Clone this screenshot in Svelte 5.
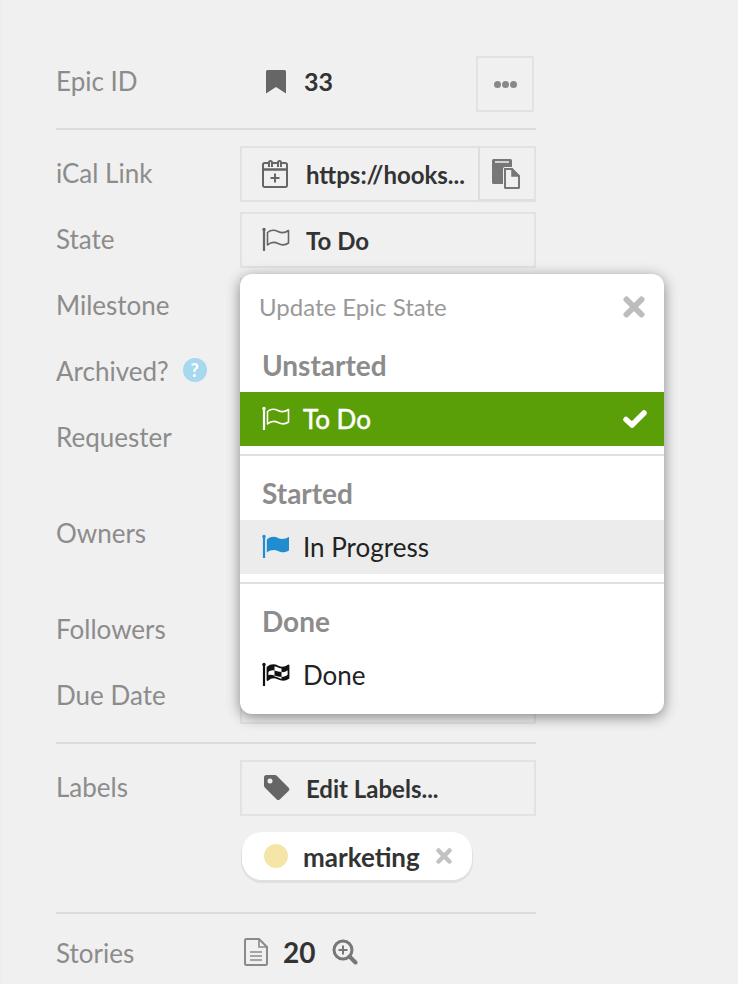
<script>
  const rows = [
    { label: 'Milestone', height: 56 },
    { label: 'Archived?', height: 56, help: true },
    { label: 'Requester', height: 86 },
    { label: 'Owners', height: 86 },
    { label: 'Followers', height: 56 },
    { label: 'Due Date', height: 56 }
  ];
</script>

{#snippet flag(color)}
  <svg class="flag" viewBox="0 0 28 26" width="28" height="26" fill="none" stroke={color} stroke-width="1.600">
    <path d="M2 3v21" stroke-width="2.200" />
    <circle cx="2" cy="2.400" r="1.700" fill={color} stroke="none" />
    <path d="M5.500 5.500C9 2.500 13 3 16 4.500S23 6 26.500 3.500V16C23 18.500 19 18 16 16.500S9 15 5.500 18z" stroke-linejoin="round" />
  </svg>
{/snippet}

<main class="panel">
  <div class="row top">
    <div class="label">Epic ID</div>
    <div class="epic">
      <svg class="bookmark" viewBox="0 0 20 24" width="20" height="24"><path d="M1.500 0h17A1.500 1.500 0 0 1 20 1.500V23.500L10 17 0 23.500V1.500A1.500 1.500 0 0 1 1.500 0z" fill="#666" /></svg>
      <span class="num">33</span>
      <button class="more" aria-label="More"><i></i><i></i><i></i></button>
    </div>
  </div>
  <hr class="rule first" />

  <div class="row">
    <div class="label">iCal Link</div>
    <div class="box ical">
      <svg class="icon" viewBox="0 0 26 28" width="26" height="28" fill="none" stroke="#666" stroke-width="2">
        <path d="M6 4H2.500A1.500 1.500 0 0 0 1 5.500v21A1.500 1.500 0 0 0 2.500 28h21a1.500 1.500 0 0 0 1.500-1.500v-21A1.500 1.500 0 0 0 23.500 4H20M10 4h6" transform="translate(0 -1)" />
        <path d="M1 9.500h24" stroke-width="2.500" />
        <path d="M7 7V2.500a1.500 1.500 0 0 1 3 0V7M16 7V2.500a1.500 1.500 0 0 1 3 0V7" />
        <path d="M13 13.500v9M8.500 18h9" />
      </svg>
      <span class="text link">https://hooks...</span>
      <button class="copy" aria-label="Copy">
        <svg viewBox="0 0 28 30" width="28" height="30">
          <path d="M1.500 0h17A1.500 1.500 0 0 1 20 1.500V8h-7a2 2 0 0 0-2 2v15H1.500A1.500 1.500 0 0 1 0 23.500V1.500A1.500 1.500 0 0 1 1.500 0z" fill="#777" />
          <path d="M3 3h14" stroke="#f0f0f0" stroke-width="1.500" />
          <path d="M13 10h7l7 7v11.500a.5.500 0 0 1-.5.500h-13a.5.500 0 0 1-.5-.5z" fill="none" stroke="#777" stroke-width="2" />
          <path d="M20 9v8h7" fill="#777" stroke="#777" stroke-width="1.500" />
        </svg>
      </button>
    </div>
  </div>

  <div class="row">
    <div class="label">State</div>
    <div class="box">
      <span class="slot">{@render flag('#666')}</span>
      <span class="text">To Do</span>
    </div>
  </div>

  {#each rows as row}
    <div class="row">
      <div class="label">
        {row.label}
        {#if row.help}<span class="help">?</span>{/if}
      </div>
      <div class="box" style="height: {row.height}px"></div>
    </div>
  {/each}

  <hr class="rule labels-rule" />

  <div class="row">
    <div class="label">Labels</div>
    <div class="box">
      <svg class="icon tag" viewBox="0 0 26 25" width="26" height="25">
        <path d="M2.500 0h8.500a3 3 0 0 1 2 1l11.500 11.500a2.500 2.500 0 0 1 0 3.500L16 24.200a2.500 2.500 0 0 1-3.500 0L1 12.700a3 3 0 0 1-1-2V2.500A2.500 2.500 0 0 1 2.500 0zM6 3.500a2.500 2.500 0 1 0 0 5 2.500 2.500 0 0 0 0-5z" fill="#666" fill-rule="evenodd" />
      </svg>
      <span class="text labels-text">Edit Labels...</span>
    </div>
  </div>

  <div class="chip-row">
    <div class="chip">
      <span class="dot"></span>
      <span class="chip-name">marketing</span>
      <svg viewBox="0 0 16 16" width="16" height="16"><path d="M2.500 2.500l11 11M13.500 2.500l-11 11" stroke="#c2c2c2" stroke-width="4.500" stroke-linecap="round" /></svg>
    </div>
  </div>

  <hr class="rule" />

  <div class="row stories">
    <div class="label">Stories</div>
    <div class="story-value">
      <svg viewBox="0 0 24 28" width="24" height="28" fill="none" stroke="#8a8a8a" stroke-width="2">
        <path d="M1 2.500A1.500 1.500 0 0 1 2.500 1H15l8 8v16.500a1.500 1.500 0 0 1-1.500 1.500h-19A1.500 1.500 0 0 1 1 25.500z" />
        <path d="M15 1v8h8M6 14h12M6 18h12M6 22h12" stroke-width="1.600" />
      </svg>
      <span class="count">20</span>
      <svg viewBox="0 0 26 26" width="26" height="26" fill="none" stroke="#777">
        <circle cx="11" cy="11" r="9" stroke-width="3" />
        <path d="M11 6.500v9M6.500 11h9" stroke-width="2" />
        <path d="M17.500 17.500l6 6" stroke-width="4" stroke-linecap="round" />
      </svg>
    </div>
  </div>

  <section class="popup">
    <header class="popup-head">
      <span>Update Epic State</span>
      <svg viewBox="0 0 22 22" width="22" height="22"><path d="M3.500 3.500l15 15M18.500 3.500l-15 15" stroke="#bdbdbd" stroke-width="6" stroke-linecap="round" /></svg>
    </header>

    <h3 class="group first-group">Unstarted</h3>
    <div class="option selected">
      {@render flag('#fff')}
      <span class="name">To Do</span>
      <svg class="check" viewBox="0 0 24 18" width="24" height="18"><path d="M3 9.500l6 5.500L21 3" fill="none" stroke="#fff" stroke-width="5.500" stroke-linecap="round" stroke-linejoin="round" /></svg>
    </div>
    <hr class="sep" />

    <h3 class="group">Started</h3>
    <div class="option hover">
      <svg class="flag" viewBox="0 0 28 26" width="28" height="26">
        <path d="M2 3v21" stroke="#1f8dd0" stroke-width="2.200" />
        <circle cx="2" cy="2.400" r="1.700" fill="#1f8dd0" />
        <path d="M4.800 5.500C9 2 13 2.500 16 4S23 5.500 27 2.800V16.500C23 19 19 18.500 16 17S9 15.500 4.800 18.500z" fill="#1f8dd0" />
      </svg>
      <span class="name">In Progress</span>
    </div>
    <hr class="sep" />

    <h3 class="group">Done</h3>
    <div class="option">
      <svg class="flag" viewBox="0 0 28 26" width="28" height="26">
        <path d="M2 3v21" stroke="#111" stroke-width="2.200" />
        <circle cx="2" cy="2.400" r="1.700" fill="#111" />
        <path d="M5.500 5.500C9 2.500 13 3 16 4.500S23 6 26.500 3.500V16C23 18.500 19 18 16 16.500S9 15 5.500 18z" fill="#fff" stroke="#111" stroke-width="1.800" stroke-linejoin="round" />
        <path d="M5.500 5.500C8 3.500 10.500 3.200 12.500 3.500V8.500C10 8 8 8.500 5.500 10.500zM19.500 5.500C22 6 24 5 26.500 3.500V8C24 9.500 22 10.500 19.500 10zM12.500 8.500C15 9 17 10 19.500 10V15C17 15 15 14 12.500 13.500zM5.500 13.500C8 12 10 13 12.500 13.500V15C10 14.500 8 15.500 5.500 18zM19.500 15C22 15 24 14 26.500 12.500V16C24 18 22 18 19.500 17.500z" fill="#111" />
      </svg>
      <span class="name">Done</span>
    </div>
  </section>
</main>

<style>
  :global(body) {
    background: #f0f0f0;
    font-family: Lato, "Open Sans", sans-serif;
  }

  .panel {
    position: relative;
    box-sizing: border-box;
    width: 738px;
    height: 984px;
    padding: 56px 0 0 56px;
    overflow: hidden;
    box-shadow: inset 2px 0 0 #ededed;
  }

  .row {
    display: grid;
    grid-template-columns: 184px 296px;
    margin-bottom: 10px;
  }

  .label {
    display: flex;
    align-items: flex-start;
    gap: 14px;
    padding: 11px 0 0;
    font-size: 26px;
    line-height: 32px;
    color: #8c8c8c;
  }

  .top .label {
    padding-top: 9px;
  }

  .epic {
    display: flex;
    align-items: flex-start;
    height: 56px;
  }

  .bookmark {
    margin: 14px 0 0 26px;
  }

  .num {
    margin: 8px 0 0 18px;
    font-size: 25px;
    line-height: 34px;
    font-weight: 700;
    color: #333;
  }

  .more {
    display: flex;
    align-items: center;
    justify-content: center;
    gap: 1px;
    box-sizing: border-box;
    width: 58px;
    height: 56px;
    margin-left: auto;
    margin-right: 2px;
    padding: 1px 0 0;
    background: none;
    border: 2px solid #e2e2e2;
  }

  .more i {
    width: 7px;
    height: 7px;
    border-radius: 50%;
    background: #888;
  }

  .rule {
    width: 480px;
    height: 2px;
    margin: 0 0 16px;
    border: 0;
    background: #dcdcdc;
  }

  .rule.first {
    margin-top: 16px;
  }

  .labels-rule {
    margin-top: 18px;
  }

  .box {
    display: flex;
    align-items: center;
    box-sizing: border-box;
    height: 56px;
    padding: 0 0 0 20px;
    border: 2px solid #e2e2e2;
  }

  .slot {
    display: flex;
  }

  .icon {
    flex: none;
  }

  .text {
    margin-left: 16px;
    font-size: 24px;
    font-weight: 700;
    color: #333;
    white-space: nowrap;
  }

  .ical .text {
    margin-left: 18px;
  }

  .copy {
    display: flex;
    align-items: center;
    justify-content: center;
    box-sizing: border-box;
    width: 56px;
    height: 54px;
    margin: 0 0 0 auto;
    padding: 2px 2px 0 0;
    background: none;
    border: 0;
    border-left: 2px solid #dedede;
    border-bottom: 2px solid #dedede;
  }

  .help {
    width: 24px;
    height: 24px;
    margin-top: 3px;
    border-radius: 50%;
    background: #a6d8ee;
    color: #fff;
    font-size: 18px;
    font-weight: 900;
    line-height: 24px;
    text-align: center;
  }

  .tag {
    margin: -2px 0 0 2px;
  }

  .chip-row {
    margin: 16px 0 30px 186px;
    height: 50px;
  }

  .chip {
    display: inline-flex;
    align-items: center;
    box-sizing: border-box;
    width: 230px;
    height: 48px;
    padding: 0 20px 0 22px;
    border-radius: 20px;
    background: #fff;
    box-shadow: 0 2px 0 1px #e0e0e0;
  }

  .dot {
    width: 24px;
    height: 24px;
    border-radius: 50%;
    background: #f5e6a8;
  }

  .chip-name {
    flex: 1;
    margin-left: 15px;
    padding-top: 1px;
    font-size: 26px;
    font-weight: 700;
    color: #333;
  }

  .stories {
    margin-top: -4px;
  }

  .story-value {
    display: flex;
    align-items: center;
    height: 52px;
    padding-left: 4px;
  }

  .count {
    margin-left: 15px;
    font-size: 28px;
    font-weight: 700;
    color: #333;
  }

  .story-value svg:last-child {
    margin-left: 17px;
  }

  .popup {
    position: absolute;
    left: 240px;
    top: 274px;
    box-sizing: border-box;
    width: 424px;
    height: 440px;
    border-radius: 12px;
    background: #fff;
    box-shadow: 0 3px 14px rgba(0, 0, 0, 0.45);
    overflow: hidden;
  }

  .popup-head {
    display: flex;
    align-items: center;
    justify-content: space-between;
    height: 68px;
    padding: 0 19px 0 19px;
    font-size: 24px;
    color: #999;
  }

  .popup-head span {
    margin-top: -4px;
  }

  .popup-head svg {
    margin-top: -2px;
  }

  .group {
    box-sizing: border-box;
    height: 64px;
    margin: 0;
    padding: 21px 0 0 22px;
    font-size: 28px;
    line-height: 32px;
    font-weight: 700;
    color: #8c8c8c;
  }

  .first-group {
    height: 50px;
    padding-top: 7px;
  }

  .option {
    display: flex;
    align-items: center;
    height: 54px;
    padding: 0 17px 0 22px;
    font-size: 26px;
    color: #222;
  }

  .option.selected {
    background: #5a9e08;
    color: #fff;
    -webkit-text-stroke: 0.5px #fff;
  }

  .option.hover {
    background: #ececec;
  }

  .name {
    flex: 1;
    margin-left: 13px;
  }

  .check {
    flex: none;
  }

  .sep {
    height: 2px;
    margin: 8px 0 0;
    border: 0;
    background: #e0e0e0;
  }
</style>
